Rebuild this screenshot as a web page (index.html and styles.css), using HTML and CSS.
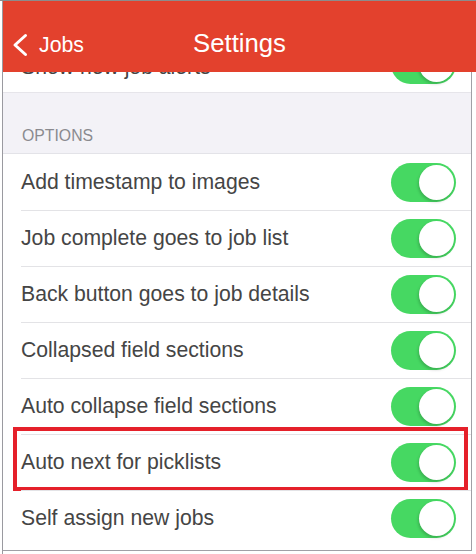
FILE: index.html
```html
<!DOCTYPE html>
<html>
<head>
<meta charset="utf-8">
<link rel="stylesheet" href="styles.css">
</head>
<body>
<div class="screen">
  <div class="frame">
    <header class="nav">
      <div class="back">
        <svg class="chev" width="16" height="24" viewBox="0 0 16 24"><polyline points="13.5,2.5 3,12 13.5,21.5" fill="none" stroke="#fff" stroke-width="3" stroke-linecap="round" stroke-linejoin="round"/></svg>
        <span>Jobs</span>
      </div>
      <div class="title">Settings</div>
      <div></div>
    </header>
    <main class="content">
      <div class="list first">
        <div class="row"><span class="label">Show new job alerts</span><span class="switch"><span class="knob"></span></span></div>
      </div>
      <div class="section-head">OPTIONS</div>
      <div class="list">
        <div class="row"><span class="label">Add timestamp to images</span><span class="switch"><span class="knob"></span></span></div>
        <div class="row"><span class="label">Job complete goes to job list</span><span class="switch"><span class="knob"></span></span></div>
        <div class="row"><span class="label">Back button goes to job details</span><span class="switch"><span class="knob"></span></span></div>
        <div class="row"><span class="label">Collapsed field sections</span><span class="switch"><span class="knob"></span></span></div>
        <div class="row"><span class="label">Auto collapse field sections</span><span class="switch"><span class="knob"></span></span></div>
        <div class="row highlighted"><span class="label">Auto next for picklists</span><span class="switch"><span class="knob"></span></span><span class="mark"></span></div>
        <div class="row"><span class="label">Self assign new jobs</span><span class="switch"><span class="knob"></span></span></div>
      </div>
    </main>
  </div>
</div>
</body>
</html>
```
FILE: styles.css
```css
html, body {
  margin: 0;
  padding: 0;
  background: #ffffff;
}
body {
  font-family: "Liberation Sans", Arial, sans-serif;
}
.screen {
  width: 476px;
  height: 554px;
  box-sizing: border-box;
  border-top: 1px solid #8c8c8c;
  overflow: hidden;
}
.frame {
  margin-left: 2px;
  border-left: 1px solid #9a9aa0;
  height: 553px;
}
.nav {
  height: 71px;
  background: #e3412d;
  color: #ffffff;
  display: grid;
  grid-template-columns: 1fr auto 1fr;
  box-sizing: border-box;
  padding-top: 23px;
  line-height: 38px;
}
.back {
  display: flex;
  align-items: center;
  padding-left: 9px;
  font-size: 21.3px;
  height: 38px;
}
.chev {
  display: block;
  margin-top: 3px;
  margin-right: 11px;
}
.back span {
  line-height: 38px;
  margin-top: 4px;
}
.title {
  font-size: 25.7px;
}
.content {
  width: 468px;
  height: 478px;
  border-right: 1px solid #a0a0a6;
  border-bottom: 1px solid #a0a0a6;
  overflow: hidden;
  background: #ffffff;
}
.list.first {
  margin-top: -36px;
}
.list.first .label {
  margin-top: 6px;
}
.list {
  background: #ffffff;
}
.row {
  position: relative;
  height: 56px;
  display: flex;
  align-items: center;
  justify-content: space-between;
  padding: 0 15px 0 18px;
  box-sizing: border-box;
}
.row + .row::before {
  content: "";
  position: absolute;
  left: 18px;
  right: 0;
  top: 0;
  height: 1px;
  background: #e3e3e6;
}
.label {
  font-size: 21.2px;
  color: #454545;
  line-height: 56px;
}
.section-head {
  background: #f3f2f7;
  border-top: 1px solid #e6e5ea;
  border-bottom: 1px solid #e3e3e8;
  color: #8a8a8f;
  font-size: 15.8px;
  line-height: 20px;
  padding: 33px 19px 7px;
}
.switch {
  width: 65px;
  height: 39px;
  border-radius: 20px;
  background: #46d862;
  position: relative;
  flex: none;
}
.knob {
  position: absolute;
  right: 2px;
  top: 2px;
  width: 35px;
  height: 35px;
  border-radius: 50%;
  background: #ffffff;
  box-shadow: -1px 2px 3px rgba(0, 0, 0, 0.18);
}
.mark {
  position: absolute;
  left: 10px;
  right: 3px;
  top: -7px;
  bottom: -1px;
  border: 4px solid #e5202a;
  pointer-events: none;
}
```
